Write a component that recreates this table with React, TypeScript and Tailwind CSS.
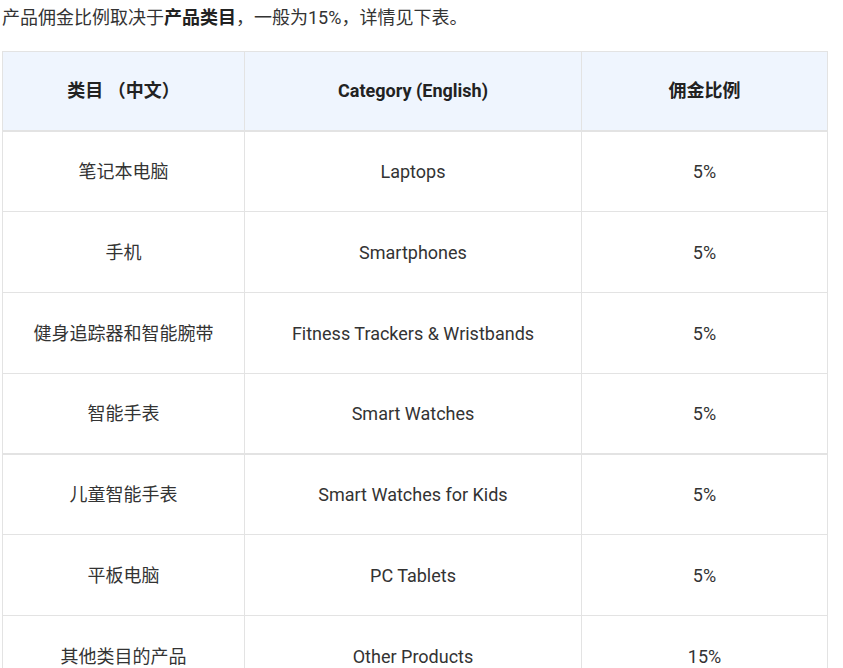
const FONT = 'Roboto, "Noto Sans CJK SC", sans-serif';

type Row = { zh: string; en: string; rate: string; thick?: boolean };

const rows: Row[] = [
  { zh: "笔记本电脑", en: "Laptops", rate: "5%" },
  { zh: "手机", en: "Smartphones", rate: "5%" },
  { zh: "健身追踪器和智能腕带", en: "Fitness Trackers & Wristbands", rate: "5%" },
  { zh: "智能手表", en: "Smart Watches", rate: "5%", thick: true },
  { zh: "儿童智能手表", en: "Smart Watches for Kids", rate: "5%" },
  { zh: "平板电脑", en: "PC Tablets", rate: "5%" },
  { zh: "其他类目的产品", en: "Other Products", rate: "15%" },
];

export default function App() {
  return (
    <div className="bg-white min-h-screen text-[#333] overflow-hidden h-[668px]" style={{ fontFamily: FONT }}>
      {/* Intro line */}
      <p className="pl-[2px] pt-[4px] text-[18px] leading-[28px] text-[#333]">
        产品佣金比例取决于<b className="font-bold text-[#222]">产品类目</b>，一般为15%，详情见下表。
      </p>

      {/* Commission table */}
      <table className="ml-[2px] mt-[19px] border-collapse text-[18px] text-center w-[825px] table-fixed">
        <colgroup>
          <col className="w-[242px]" />
          <col className="w-[337px]" />
          <col className="w-[246px]" />
        </colgroup>
        <thead>
          <tr className="bg-[#eff5fe] border-b-2 border-[#e3e3e3]">
            <th className="h-[79px] border border-[#e3e3e3] font-bold text-[#222]">类目 （中文）</th>
            <th className="h-[79px] border border-[#e3e3e3] font-bold text-[#222]">Category (English)</th>
            <th className="h-[79px] border border-[#e3e3e3] font-bold text-[#222]">佣金比例</th>
          </tr>
        </thead>
        <tbody>
          {rows.map((r) => {
            const cell = r.thick
              ? "h-[80px] border border-[#e3e3e3] pt-[1px]"
              : "h-[81px] border border-[#e3e3e3] pt-[1px]";
            return (
              <tr key={r.zh} className={r.thick ? "border-b-2 border-[#e3e3e3]" : ""}>
                <td className={cell}>{r.zh}</td>
                <td className={cell}>{r.en}</td>
                <td className={cell}>{r.rate}</td>
              </tr>
            );
          })}
        </tbody>
      </table>
    </div>
  );
}
